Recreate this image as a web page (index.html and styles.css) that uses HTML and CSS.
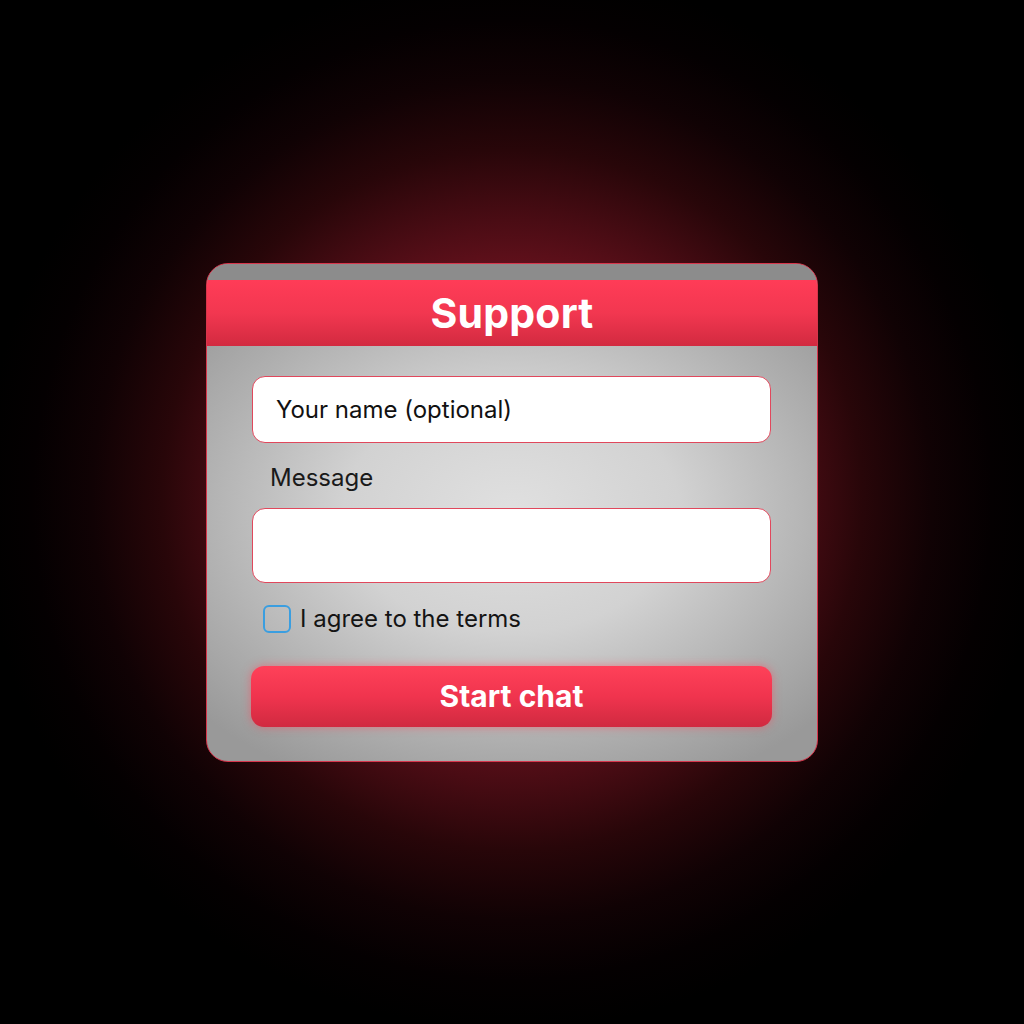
FILE: index.html
```html
<!DOCTYPE html>
<html>
<head>
<meta charset="utf-8">
<link rel="stylesheet" href="styles.css">
</head>
<body>
<div class="stage">
  <div class="card">
    <div class="header">Support</div>
    <div class="body">
      <div class="field name">Your name (optional)</div>
      <div class="label">Message</div>
      <div class="field area"></div>
      <div class="check-row">
        <span class="checkbox"></span>
        <span class="check-text">I agree to the terms</span>
      </div>
      <div class="button">Start chat</div>
    </div>
  </div>
</div>
</body>
</html>
```
FILE: styles.css
```css
html, body {
  margin: 0;
  padding: 0;
  background: #000;
}
.stage {
  width: 1024px;
  height: 1024px;
  display: flex;
  align-items: center;
  justify-content: center;
  background: radial-gradient(circle at 512px 500px, #801522 0px, #701320 200px, #4a0c14 280px, #280609 350px, #100204 420px, #040001 480px, #000 530px);
  font-family: Inter, "Noto Sans", sans-serif;
}
.card {
  width: 610px;
  border: 1px solid #d7364c;
  border-radius: 22px;
  overflow: hidden;
  background: radial-gradient(ellipse 420px 300px at 50% 50%, #e0e0e0 0%, #d2d2d2 40%, #b0b0b0 75%, #999 100%);
  padding-top: 16px;
  display: flex;
  flex-direction: column;
}
.header {
  height: 66px;
  display: flex;
  align-items: center;
  justify-content: center;
  background: linear-gradient(#ff3c57, #f23750 50%, #d22a40);
  color: #fff;
  font-weight: 700;
  font-size: 41px;
  letter-spacing: 0.2px;
  box-shadow: 0 -16px 0 #8c8c8c;
}
.body {
  padding: 30px 46px 34px 45px;
  display: flex;
  flex-direction: column;
}
.field {
  background: #fff;
  border: 1.5px solid #e0485c;
  border-radius: 13px;
  box-sizing: border-box;
}
.name {
  height: 67px;
  display: flex;
  align-items: center;
  padding-left: 23px;
  font-size: 24px;
  color: #111;
}
.label {
  margin-top: 20px;
  height: 30px;
  line-height: 30px;
  padding-left: 18px;
  font-size: 24px;
  color: #1a1a1a;
}
.area {
  margin-top: 15px;
  height: 75px;
}
.check-row {
  margin-top: 22px;
  height: 28px;
  display: flex;
  align-items: center;
  padding-left: 11px;
  gap: 9px;
}
.checkbox {
  width: 28px;
  height: 28px;
  box-sizing: border-box;
  border: 2px solid #3a9ee0;
  border-radius: 6px;
  background: rgba(255,255,255,0.05);
}
.check-text {
  font-size: 24px;
  color: #141414;
}
.button {
  margin-top: 33px;
  height: 61px;
  margin-left: -1px;
  margin-right: -1px;
  border-radius: 13px;
  background: linear-gradient(#ff4159, #f0344e 50%, #d02a40);
  color: #fff;
  font-weight: 700;
  font-size: 30px;
  display: flex;
  align-items: center;
  justify-content: center;
  box-shadow: 0 0 10px rgba(255, 70, 90, 0.55);
}
```
